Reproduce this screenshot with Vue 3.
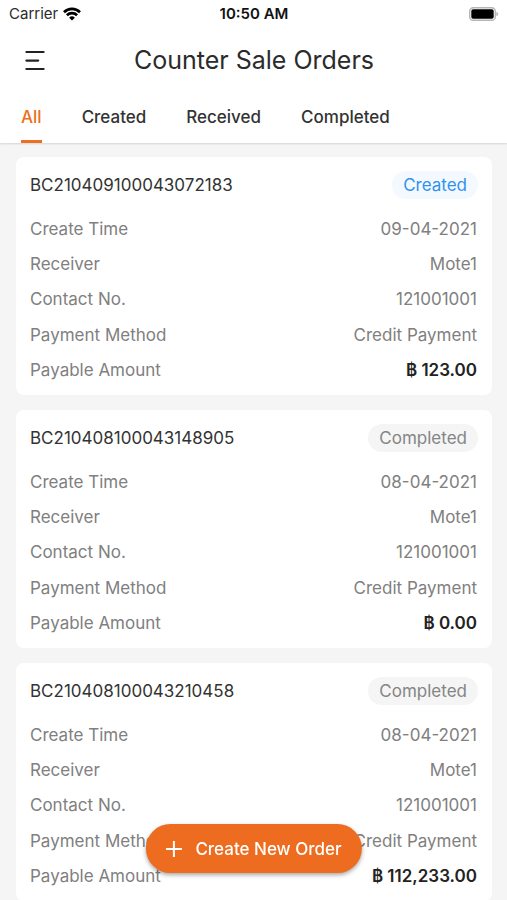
<script setup>
import { ref, computed } from 'vue'

const tabs = ['All', 'Created', 'Received', 'Completed']
const currentTab = ref('All')

// order list
const orders = ref([
  {
    id: 'BC210409100043072183',
    status: 'Created',
    createTime: '09-04-2021',
    receiver: 'Mote1',
    contact: '121001001',
    payment: 'Credit Payment',
    amount: '123.00'
  },
  {
    id: 'BC210408100043148905',
    status: 'Completed',
    createTime: '08-04-2021',
    receiver: 'Mote1',
    contact: '121001001',
    payment: 'Credit Payment',
    amount: '0.00'
  },
  {
    id: 'BC210408100043210458',
    status: 'Completed',
    createTime: '08-04-2021',
    receiver: 'Mote1',
    contact: '121001001',
    payment: 'Credit Payment',
    amount: '112,233.00'
  }
])

const visibleOrders = computed(() => {
  if (currentTab.value === 'All') return orders.value
  return orders.value.filter(o => o.status === currentTab.value)
})
</script>

<template>
  <div class="orders-app">
    <header class="top">
      <div class="status-bar">
        <div class="carrier">
          <span>Carrier</span>
          <svg class="wifi" viewBox="0 0 18 14" aria-hidden="true">
            <path d="M1 5.2a11.5 11.5 0 0 1 16 0" />
            <path d="M3.9 8.2a7.3 7.3 0 0 1 10.2 0" />
            <path class="dot" d="M9 13.6 6.1 10.7a4.1 4.1 0 0 1 5.8 0z" />
          </svg>
        </div>
        <span class="clock">10:50 AM</span>
        <svg class="battery" viewBox="0 0 30 14" aria-hidden="true">
          <rect x="0.7" y="0.7" width="25.6" height="12.6" rx="3.6" fill="#fff" stroke="#b5b5b5" stroke-width="1.4" />
          <rect x="2.3" y="2.3" width="22.4" height="9.4" rx="1.8" fill="#000" />
          <path d="M27.4 4.8c2.4.8 2.4 3.6 0 4.4z" fill="#b5b5b5" />
        </svg>
      </div>

      <div class="title-bar">
        <button class="menu-btn" type="button" aria-label="Menu">
          <svg viewBox="0 0 20 20" aria-hidden="true">
            <path d="M1.4 2h17.2M1.4 10.6h11.8M1.4 19h17.2" />
          </svg>
        </button>
        <h1>Counter Sale Orders</h1>
      </div>

      <nav class="tabs">
        <button
          v-for="tab in tabs"
          :key="tab"
          type="button"
          :class="['tab', { active: tab === currentTab }]"
          @click="currentTab = tab"
        >
          {{ tab }}
        </button>
      </nav>
    </header>

    <main class="order-list">
      <article v-for="order in visibleOrders" :key="order.id" class="order-card">
        <div class="card-head">
          <h2>{{ order.id }}</h2>
          <span :class="['badge', order.status.toLowerCase()]">{{ order.status }}</span>
        </div>
        <dl class="details">
          <div class="row">
            <dt>Create Time</dt>
            <dd>{{ order.createTime }}</dd>
          </div>
          <div class="row">
            <dt>Receiver</dt>
            <dd>{{ order.receiver }}</dd>
          </div>
          <div class="row">
            <dt>Contact No.</dt>
            <dd>{{ order.contact }}</dd>
          </div>
          <div class="row">
            <dt>Payment Method</dt>
            <dd>{{ order.payment }}</dd>
          </div>
          <div class="row">
            <dt>Payable Amount</dt>
            <dd class="amount">฿ {{ order.amount }}</dd>
          </div>
        </dl>
      </article>
    </main>

    <button class="create-btn" type="button">
      <svg viewBox="0 0 16 16" aria-hidden="true">
        <path d="M8 0v16M0 8h16" />
      </svg>
      <span>Create New Order</span>
    </button>
  </div>
</template>

<style>
body {
  margin: 0;
  background: #f5f5f5;
}
</style>

<style scoped>
.orders-app {
  display: flex;
  flex-direction: column;
  height: 100vh;
  font-family: Inter, Roboto, "Liberation Sans", sans-serif;
  font-size: 17px;
  line-height: 24px;
  color: #2b2b2b;
  background: #f5f5f5;
}

button {
  font: inherit;
  border: none;
  background: none;
  cursor: pointer;
}

/* header */
.top {
  flex: none;
  background: #fff;
  box-shadow: 0 1px 2px rgba(0, 0, 0, 0.14);
  z-index: 1;
}

.status-bar {
  display: grid;
  grid-template-columns: 1fr auto 1fr;
  align-items: center;
  height: 28px;
  padding: 0 8px 0 9px;
  font-size: 15px;
}

.carrier {
  display: flex;
  align-items: center;
  gap: 5px;
}

.wifi {
  width: 18px;
  height: 14px;
  fill: none;
  stroke: #000;
  stroke-width: 2.7;
}

.wifi .dot {
  fill: #000;
  stroke: none;
}

.clock {
  font-weight: 600;
  color: #111;
}

.battery {
  justify-self: end;
  width: 30px;
  height: 14px;
}

.title-bar {
  display: grid;
  grid-template-columns: 40px 1fr 40px;
  align-items: center;
  height: 64px;
  padding: 0 16px 0 17px;
}

.menu-btn {
  display: flex;
  padding: 8px;
}

.menu-btn svg {
  width: 20px;
  height: 20px;
  fill: none;
  stroke: #222;
  stroke-width: 2.2;
  stroke-linecap: round;
  overflow: visible;
}

.title-bar h1 {
  margin: 0;
  font-size: 25px;
  font-weight: 400;
  line-height: 32px;
  text-align: center;
}

.tabs {
  display: flex;
  gap: 40px;
  padding: 0 21px;
}

.tab {
  height: 51px;
  padding: 2px 0 0;
  font-weight: 500;
  color: #333;
  border-bottom: 3px solid transparent;
}

.tab.active {
  color: #ed6f21;
  border-bottom-color: #ed6f21;
}

/* cards */
.order-list {
  flex: 1;
  display: flex;
  flex-direction: column;
  gap: 15px;
  padding: 14px 15px 14px 16px;
  overflow-y: auto;
  scrollbar-width: none;
}

.order-card {
  flex: none;
  padding: 14px 14px 7px;
  background: #fff;
  border-radius: 8px;
}

.card-head {
  display: flex;
  align-items: center;
  justify-content: space-between;
  height: 28px;
  margin-bottom: 12px;
}

.card-head h2 {
  margin: 0;
  font-size: 17px;
  font-weight: 400;
  color: #333;
}

.badge {
  padding: 2px 11px;
  border-radius: 14px;
}

.badge.created {
  color: #2f93ee;
  background: #f3f9ff;
}

.badge.completed {
  color: #858585;
  background: #f5f5f5;
}

.details {
  display: grid;
  grid-template-rows: repeat(5, 1fr);
  height: 177px;
  margin: 0;
  padding-right: 1px;
  color: #808080;
}

.row {
  display: flex;
  align-items: center;
  justify-content: space-between;
}

.row dd {
  margin: 0;
}

.row .amount {
  font-weight: 600;
  color: #222;
}

/* floating button over the list */
.create-btn {
  position: fixed;
  bottom: 27px;
  left: 50%;
  z-index: 2;
  display: flex;
  align-items: center;
  gap: 14px;
  height: 49px;
  padding: 0 20px;
  font-weight: 500;
  white-space: nowrap;
  color: #fff;
  background: #ed6c1f;
  border-radius: 25px;
  box-shadow: 0 2px 4px rgba(0, 0, 0, 0.35);
  transform: translateX(-50%);
}

.create-btn svg {
  width: 16px;
  height: 16px;
  fill: none;
  stroke: #fff;
  stroke-width: 2;
}
</style>
